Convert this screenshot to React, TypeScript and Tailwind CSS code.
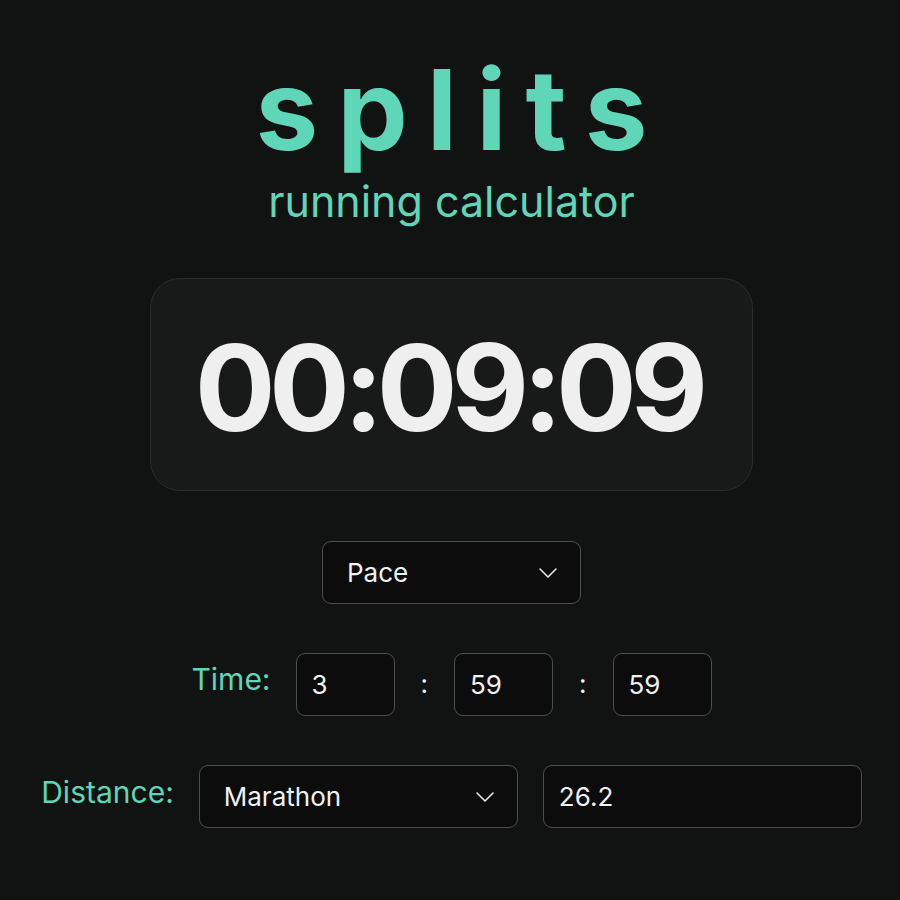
import { ChevronDown } from "lucide-react";

const font = { fontFamily: "Inter, 'Noto Sans', sans-serif" };

function Select({ label, width }: { label: string; width: string }) {
  return (
    <div
      className={`${width} h-[63px] flex items-center justify-between rounded-[9px] border-[1.5px] border-[#4d4e4e] bg-[#0c0c0c] pl-[24px] pr-[16px] text-[26px] text-[#f0f1f0]`}
    >
      <span>{label}</span>
      <ChevronDown size={32} strokeWidth={1.2} className="text-[#e8e8e8]" />
    </div>
  );
}

function Field({ value, width }: { value: string; width: string }) {
  return (
    <input
      defaultValue={value}
      className={`${width} h-[63px] rounded-[9px] border-[1.5px] border-[#4d4e4e] bg-[#0c0c0c] pl-[15px] text-[26px] text-[#f0f1f0] outline-none`}
    />
  );
}

export default function App() {
  return (
    <div
      className="min-h-screen bg-[#111313] flex flex-col items-center pt-[53px] pl-[3px]"
      style={font}
    >
      {/* Header */}
      <h1 className="text-[112px] leading-none font-bold tracking-[0.17em] pl-[0.17em] text-[#5fd6b7]">
        splits
      </h1>
      <p className="mt-[15px] text-[43px] leading-none text-[#5fd6b7]">running calculator</p>

      {/* Result */}
      <div className="mt-[55px] w-[603px] h-[213px] rounded-[30px] border border-[#2c2d2d] bg-[#181919] flex items-center justify-center">
        <span className="text-[120px] leading-none font-bold tracking-[-0.055em] text-[#eeefee] pt-[6px] pr-[0.055em]">
          00:09:09
        </span>
      </div>

      {/* Mode */}
      <div className="mt-[50px]">
        <Select label="Pace" width="w-[259px]" />
      </div>

      {/* Time */}
      <div className="mt-[49px] flex items-start">
        <label className="mt-[4px] mr-[25px] text-[30px] text-[#5fd6b7]">Time:</label>
        <Field value="3" width="w-[99px]" />
        <span className="mx-[26px] mt-[11px] text-[26px] text-[#f0f1f0]">:</span>
        <Field value="59" width="w-[99px]" />
        <span className="mx-[26px] mt-[11px] text-[26px] text-[#f0f1f0]">:</span>
        <Field value="59" width="w-[99px]" />
      </div>

      {/* Distance */}
      <div className="mt-[49px] flex items-start gap-[25px]">
        <label className="mt-[5px] text-[30px] text-[#5fd6b7]">Distance:</label>
        <Select label="Marathon" width="w-[319px]" />
        <Field value="26.2" width="w-[319px]" />
      </div>
    </div>
  );
}
